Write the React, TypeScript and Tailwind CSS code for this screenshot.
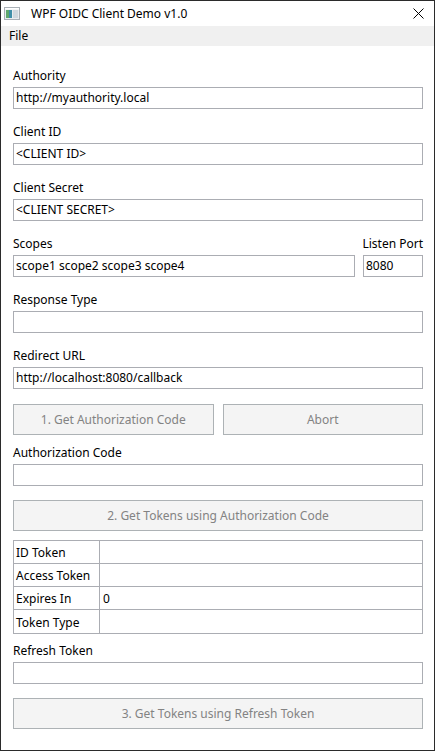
import React from "react";

const Label = ({ children, right = false }: { children: React.ReactNode; right?: boolean }) => (
  <div
    className={`h-[18px] leading-[18px] mb-[2px] text-black whitespace-nowrap flex ${
      right ? "justify-end" : ""
    }`}
  >
    {children}
  </div>
);

const TextBox = ({ value = "" }: { value?: string }) => (
  <div className="h-[22px] border border-[#abadb3] bg-white pl-[2px] leading-[20px] text-black whitespace-nowrap overflow-hidden">
    {value}
  </div>
);

const Button = ({ children }: { children: React.ReactNode }) => (
  <div className="h-[31px] flex items-center justify-center pt-[1px] border border-[#adb2b5] bg-[#f4f4f4] text-[#838383]">
    {children}
  </div>
);

const Field = ({
  label,
  value,
  className = "",
  right = false,
}: {
  label: string;
  value?: string;
  className?: string;
  right?: boolean;
}) => (
  <div className={className}>
    <Label right={right}>{label}</Label>
    <TextBox value={value} />
  </div>
);

const tokens = [
  { name: "ID Token", value: "" },
  { name: "Access Token", value: "" },
  { name: "Expires In", value: "0" },
  { name: "Token Type", value: "" },
];

const AppIcon = () => (
  <svg width="16" height="13" viewBox="0 0 16 13">
    <rect x="0.5" y="0.5" width="15" height="12" fill="#e8ecef" stroke="#a9b0b6" />
    <rect x="2" y="3" width="6" height="8" fill="#3f8fa8" />
    <rect x="2" y="3" width="3" height="8" fill="#5fa86c" />
    <rect x="9" y="3" width="5" height="8" fill="#cfd8de" />
    <rect x="1" y="1" width="14" height="1.5" fill="#ffffff" />
  </svg>
);

export default function App() {
  return (
    <div
      className="w-[435px] h-[751px] flex flex-col bg-white border border-[#2b2b2b] text-[12px]"
      style={{ fontFamily: '"Noto Sans", "Open Sans", sans-serif' }}
    >
      {/* title bar */}
      <div className="h-[25px] flex items-center bg-white shrink-0">
        <div className="ml-[3px] mr-[11px] flex items-center">
          <AppIcon />
        </div>
        <span className="text-black">WPF OIDC Client Demo v1.0</span>
        <div className="ml-auto mr-[10px] flex items-center">
          <svg width="11" height="11" viewBox="0 0 11 11">
            <path d="M0.5 0.5 L10.5 10.5 M10.5 0.5 L0.5 10.5" stroke="#000" strokeWidth="1" />
          </svg>
        </div>
      </div>

      {/* menu */}
      <div className="h-[20px] bg-[#f0f0f0] flex items-center pl-[8px] shrink-0">
        <span className="text-black">File</span>
      </div>

      {/* content */}
      <div className="flex flex-col pt-[21px] pl-[12px] pr-[11px]">
        <Field label="Authority" value="http://myauthority.local" />
        <Field label="Client ID" value="<CLIENT ID>" className="mt-[14px]" />
        <Field label="Client Secret" value="<CLIENT SECRET>" className="mt-[14px]" />

        <div className="mt-[14px] flex gap-[8px]">
          <Field label="Scopes" value="scope1 scope2 scope3 scope4" className="flex-1" />
          <Field label="Listen Port" value="8080" className="w-[60px]" right />
        </div>

        <Field label="Response Type" className="mt-[14px]" />
        <Field label="Redirect URL" value="http://localhost:8080/callback" className="mt-[14px]" />

        <div className="mt-[15px] grid grid-cols-2 gap-[9px]">
          <Button>1. Get Authorization Code</Button>
          <Button>Abort</Button>
        </div>

        <Field label="Authorization Code" className="mt-[9px]" />

        <div className="mt-[14px]">
          <Button>2. Get Tokens using Authorization Code</Button>
        </div>

        {/* token table */}
        <div className="mt-[9px] border border-[#abadb3]">
          {tokens.map((t, i) => (
            <div
              key={t.name}
              className={`h-[23px] flex pt-[2px] ${i < tokens.length - 1 ? "border-b border-[#abadb3]" : ""}`}
            >
              <div className="w-[86px] border-r border-[#abadb3] -mt-[2px] pt-[2px] pl-[2px] flex items-center text-black">
                {t.name}
              </div>
              <div className="flex-1 pl-[3px] flex items-center text-black">{t.value}</div>
            </div>
          ))}
        </div>

        <Field label="Refresh Token" className="mt-[8px]" />

        <div className="mt-[14px]">
          <Button>3. Get Tokens using Refresh Token</Button>
        </div>
      </div>
    </div>
  );
}
